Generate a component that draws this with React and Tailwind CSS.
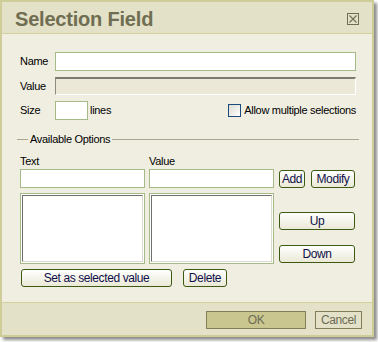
import React from 'react';

const font = { fontFamily: '"Liberation Sans", Arial, sans-serif' };

function Btn({ className = '', children }) {
  return (
    <button
      className={`h-[18px] rounded-[3px] border border-[#3d5a14] bg-gradient-to-b from-white to-[#ebe9d6] text-[12px] leading-none tracking-[-0.4px] text-[#10104a] ${className}`}
    >
      {children}
    </button>
  );
}

function Input({ className = '' }) {
  return <div className={`h-[19px] border border-[#a6ba88] bg-white ${className}`} />;
}

function ListBox() {
  return (
    <div className="h-[71px] w-[125px] border border-[#a6ba88] bg-white p-px">
      <div className="h-full w-full border-t border-l border-t-[#6f6f6f] border-l-[#6f6f6f] border-b border-r border-b-[#dcdace] border-r-[#dcdace]" />
    </div>
  );
}

export default function App() {
  return (
    <div className="h-[342px] w-[378px] bg-white" style={font}>
      <div className="flex h-[337px] w-[374px] flex-col border-2 border-[#cfcd97] bg-[#efeee1] shadow-[3px_3px_3px_rgba(0,0,0,0.45)]">
        {/* title bar */}
        <div className="flex h-[32px] items-center justify-between border-b border-[#d3d19e] bg-[#e3e1c8] pl-[13px] pr-[13px]">
          <span className="mt-[3px] text-[20px] font-bold tracking-[-0.2px] text-[#6f6e52]">Selection Field</span>
          <svg width="12" height="12" viewBox="0 0 12 12" className="mt-[3px]">
            <rect x="0.5" y="0.5" width="11" height="11" fill="none" stroke="#6f6e52" />
            <path d="M2.5 2.5 L9.5 9.5 M9.5 2.5 L2.5 9.5" stroke="#6f6e52" strokeWidth="1.1" />
          </svg>
        </div>

        {/* body */}
        <div className="flex-1 pl-[18px] pr-[16px] pt-[18px] text-[11px] tracking-[-0.3px] text-black">
          <div className="flex items-center">
            <span className="w-[35px]">Name</span>
            <Input className="flex-1" />
          </div>
          <div className="mt-[6px] flex items-center">
            <span className="w-[35px]">Value</span>
            <div className="h-[18px] flex-1 border-t-2 border-l border-t-[#7c7b70] border-l-[#8c8b80] border-b border-r border-b-white border-r-white bg-[#ebe8d7]" />
          </div>
          <div className="mt-[6px] flex items-center">
            <span className="w-[35px]">Size</span>
            <Input className="w-[33px]" />
            <span className="ml-[2px]">lines</span>
            <span className="ml-auto flex items-center">
              <span className="mr-[3px] h-[13px] w-[13px] border border-[#1c4a7c] bg-gradient-to-br from-[#dcdcd2] to-white" />
              Allow multiple selections
            </span>
          </div>

          {/* fieldset legend */}
          <div className="-ml-[3px] mt-[12px] flex h-[14px] w-[342px] items-center">
            <div className="h-px w-[11px] bg-[#a9a692]" />
            <span className="px-[2px]">Available Options</span>
            <div className="h-px flex-1 bg-[#a9a692]" />
          </div>

          <div className="mt-[8px] flex">
            <div className="w-[125px]">
              <div className="h-[14px] leading-[14px]">Text</div>
              <Input className="mt-px w-[125px]" />
              <div className="mt-[5px]"><ListBox /></div>
            </div>
            <div className="ml-[4px] w-[125px]">
              <div className="h-[14px] leading-[14px]">Value</div>
              <Input className="mt-px w-[125px]" />
              <div className="mt-[5px]"><ListBox /></div>
            </div>
            <div className="ml-[5px] flex w-[76px] flex-col pt-[16px]">
              <div className="flex gap-[6px]">
                <Btn className="w-[26px]">Add</Btn>
                <Btn className="w-[44px]">Modify</Btn>
              </div>
              <Btn className="mt-[24px] w-[76px]">Up</Btn>
              <Btn className="mt-[15px] w-[76px]">Down</Btn>
            </div>
          </div>

          <div className="mt-[5px] flex pl-px">
            <Btn className="w-[151px]">Set as selected value</Btn>
            <Btn className="ml-[11px] w-[44px]">Delete</Btn>
          </div>
        </div>

        {/* footer */}
        <div className="flex h-[33px] justify-end gap-[9px] border-t border-[#d3d19e] bg-[#e3e1c8] pr-[10px] pt-[8px] text-[12px] tracking-[-0.4px] text-[#6d6c55]">
          <button className="h-[18px] w-[100px] border border-[#7f7e57] bg-[#c9c690] leading-none">OK</button>
          <button className="h-[18px] w-[47px] border border-[#7f7e57] bg-[#e3e1c8] leading-none">Cancel</button>
        </div>
      </div>
    </div>
  );
}
